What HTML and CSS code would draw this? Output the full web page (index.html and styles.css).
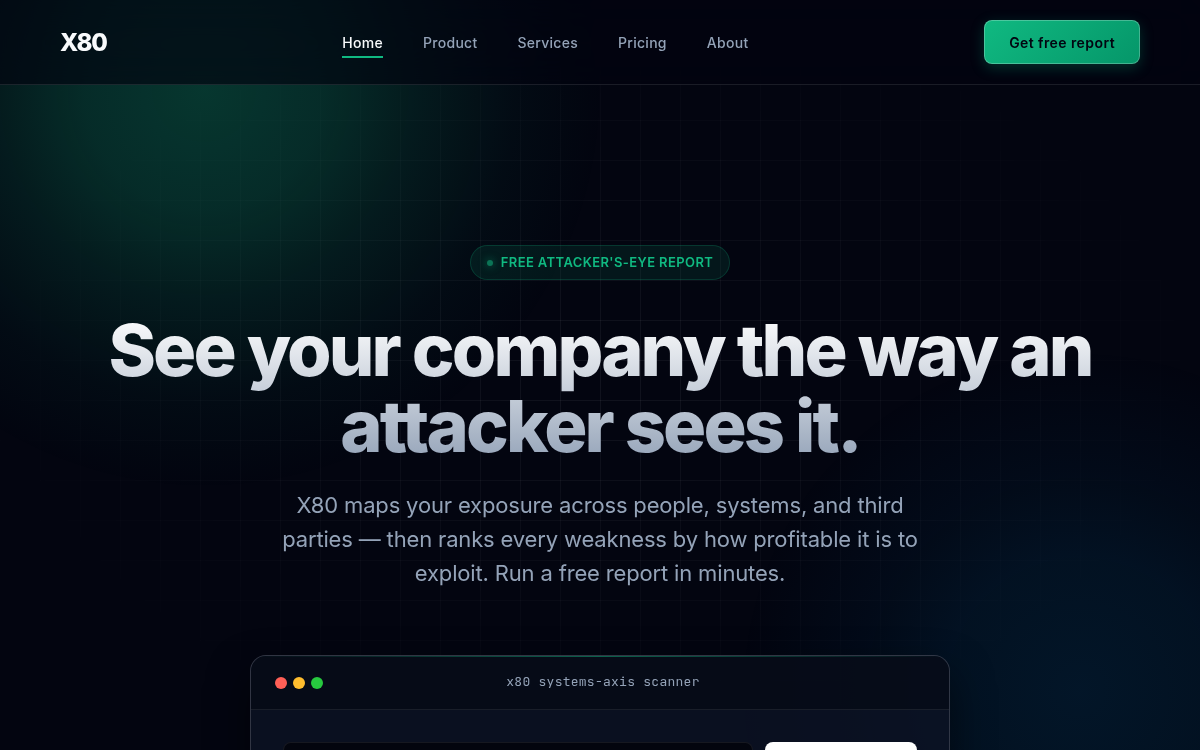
FILE: index.html
```html
<!DOCTYPE html>
<html lang="en">
<head>
    <meta charset="UTF-8">
    <meta name="viewport" content="width=device-width, initial-scale=1.0">
    <title>X80 - See your company the way an attacker sees it</title>
    <link rel="stylesheet" href="styles.css">
</head>
<body>
    <div class="backdrop"></div>
    <div class="grid-lines"></div>

    <header class="site-header">
        <a href="#" class="logo">X80</a>
        <nav class="main-nav">
            <ul>
                <li><a href="#" class="active">Home</a></li>
                <li><a href="#">Product</a></li>
                <li><a href="#">Services</a></li>
                <li><a href="#">Pricing</a></li>
                <li><a href="#">About</a></li>
            </ul>
        </nav>
        <button class="btn-primary">Get free report</button>
    </header>

    <main class="hero">
        <div class="badge"><span class="badge-dot"></span>Free attacker's-eye report</div>
        <h1>See your company the way an attacker sees it.</h1>
        <p class="lead">X80 maps your exposure across people, systems, and third parties — then ranks every weakness by how profitable it is to exploit. Run a free report in minutes.</p>

        <section class="scanner">
            <div class="scanner-bar">
                <div class="dots">
                    <span class="dot red"></span>
                    <span class="dot yellow"></span>
                    <span class="dot green"></span>
                </div>
                <div class="scanner-title">x80 systems-axis scanner</div>
            </div>
            <form class="scanner-form">
                <input type="text" aria-label="Company domain">
                <button type="button" class="btn-scan" aria-label="Run scan"></button>
            </form>
        </section>
    </main>
</body>
</html>
```
FILE: styles.css
```css
* {
    box-sizing: border-box;
}

body {
    margin: 0;
    background-color: #030510;
    color: #f8fafc;
    font-family: Inter, "Liberation Sans", sans-serif;
    letter-spacing: -0.01em;
    -webkit-font-smoothing: antialiased;
}

/* Background glow and grid */
.backdrop,
.grid-lines {
    position: fixed;
    inset: 0;
    pointer-events: none;
}

.backdrop {
    background:
        radial-gradient(circle at 17% 12%, rgba(16, 185, 129, 0.28), rgba(16, 185, 129, 0.22) 120px, rgba(16, 185, 129, 0.12) 210px, rgba(16, 185, 129, 0.04) 310px, transparent 400px),
        radial-gradient(circle at 90% 92%, rgba(3, 105, 161, 0.17), rgba(3, 105, 161, 0.13) 130px, rgba(3, 105, 161, 0.06) 220px, transparent 340px);
}

.grid-lines {
    background-image:
        linear-gradient(rgba(255, 255, 255, 0.06) 1px, transparent 1px),
        linear-gradient(90deg, rgba(255, 255, 255, 0.06) 1px, transparent 1px);
    background-size: 40px 40px;
    -webkit-mask-image: radial-gradient(ellipse at center, black, transparent 76%);
    mask-image: radial-gradient(ellipse at center, black, transparent 76%);
}

/* Header */
.site-header {
    position: sticky;
    top: 0;
    z-index: 10;
    display: flex;
    justify-content: space-between;
    align-items: center;
    padding: 20px 60px;
    background-color: rgba(2, 3, 16, 0.65);
    border-bottom: 1px solid rgba(255, 255, 255, 0.1);
    backdrop-filter: blur(20px);
}

.logo {
    color: #f8fafc;
    font-size: 24px;
    font-weight: 800;
    letter-spacing: -0.05em;
    text-decoration: none;
}

.main-nav ul {
    display: flex;
    gap: 40px;
    margin: 0;
    padding: 0;
    list-style: none;
}

.main-nav a {
    display: block;
    padding: 7px 0 3px;
    border-bottom: 2px solid transparent;
    color: #94a3b8;
    font-size: 14px;
    font-weight: 500;
    letter-spacing: 0.02em;
    line-height: 20px;
    text-decoration: none;
}

.main-nav a.active {
    color: #f8fafc;
    border-bottom-color: #10b981;
}

.btn-primary {
    height: 44px;
    padding: 0 24px;
    border: 1px solid rgba(255, 255, 255, 0.25);
    border-radius: 8px;
    background: linear-gradient(135deg, #10b981, #059669) border-box;
    box-shadow: 0 4px 14px rgba(16, 185, 129, 0.25);
    color: #020410;
    font-family: inherit;
    font-size: 14px;
    font-weight: 600;
    letter-spacing: 0.03em;
    cursor: pointer;
}

/* Hero */
.hero {
    position: relative;
    display: flex;
    flex-direction: column;
    align-items: center;
    padding: 160px 60px 120px;
    text-align: center;
}

.badge {
    display: flex;
    align-items: center;
    gap: 8px;
    padding: 8px 16px;
    border: 1px solid rgba(16, 185, 129, 0.2);
    border-radius: 100px;
    background-color: rgba(16, 185, 129, 0.1);
    color: #10b981;
    font-size: 13px;
    font-weight: 600;
    letter-spacing: 0.03em;
    line-height: 17px;
    text-transform: uppercase;
}

.badge-dot {
    width: 6px;
    height: 6px;
    border-radius: 50%;
    background-color: #0b7456;
    box-shadow: 0 0 8px rgba(16, 185, 129, 0.6);
}

h1 {
    max-width: 1000px;
    margin: 32px 0 24px;
    background: linear-gradient(180deg, #ffffff, #94a3b8);
    -webkit-background-clip: text;
    background-clip: text;
    color: transparent;
    font-size: 72px;
    font-weight: 800;
    letter-spacing: -0.04em;
    line-height: 76px;
}

.lead {
    max-width: 640px;
    margin: 0 0 65px;
    color: #94a3b8;
    font-size: 22px;
    line-height: 34px;
}

/* Scanner window */
.scanner {
    position: relative;
    width: 100%;
    max-width: 700px;
    overflow: hidden;
    border: 1px solid rgba(255, 255, 255, 0.16);
    border-radius: 16px;
    background-color: rgba(12, 19, 36, 0.8);
    box-shadow: 0 20px 40px rgba(0, 0, 0, 0.5);
}

.scanner::before {
    content: "";
    position: absolute;
    top: 0;
    left: 0;
    right: 0;
    height: 1px;
    background: linear-gradient(90deg, transparent, rgba(16, 185, 129, 0.5), transparent);
}

.scanner-bar {
    display: grid;
    grid-template-columns: 1fr auto 1fr;
    align-items: center;
    height: 54px;
    padding: 0 18px 0 24px;
    border-bottom: 1px solid rgba(255, 255, 255, 0.08);
    background-color: rgba(2, 8, 16, 0.5);
}

.dots {
    display: flex;
    gap: 6px;
}

.dot {
    width: 12px;
    height: 12px;
    border-radius: 50%;
}

.dot.red {
    background-color: #ff5f56;
}

.dot.yellow {
    background-color: #ffbd2e;
}

.dot.green {
    background-color: #27c93f;
}

.scanner-title {
    padding-bottom: 2px;
    color: #94a3b8;
    font-family: "JetBrains Mono", "DejaVu Sans Mono", monospace;
    font-size: 13px;
    letter-spacing: 0.02em;
}

.scanner-form {
    display: flex;
    gap: 12px;
    padding: 32px;
}

.scanner-form input {
    flex: 1;
    min-width: 0;
    height: 56px;
    padding: 0 20px;
    border: 1px solid rgba(255, 255, 255, 0.08);
    border-radius: 8px;
    background-color: #03050e;
    color: #f8fafc;
    font-size: 16px;
}

.btn-scan {
    width: 152px;
    border: none;
    border-radius: 8px;
    background-color: #ffffff;
    cursor: pointer;
}
```
